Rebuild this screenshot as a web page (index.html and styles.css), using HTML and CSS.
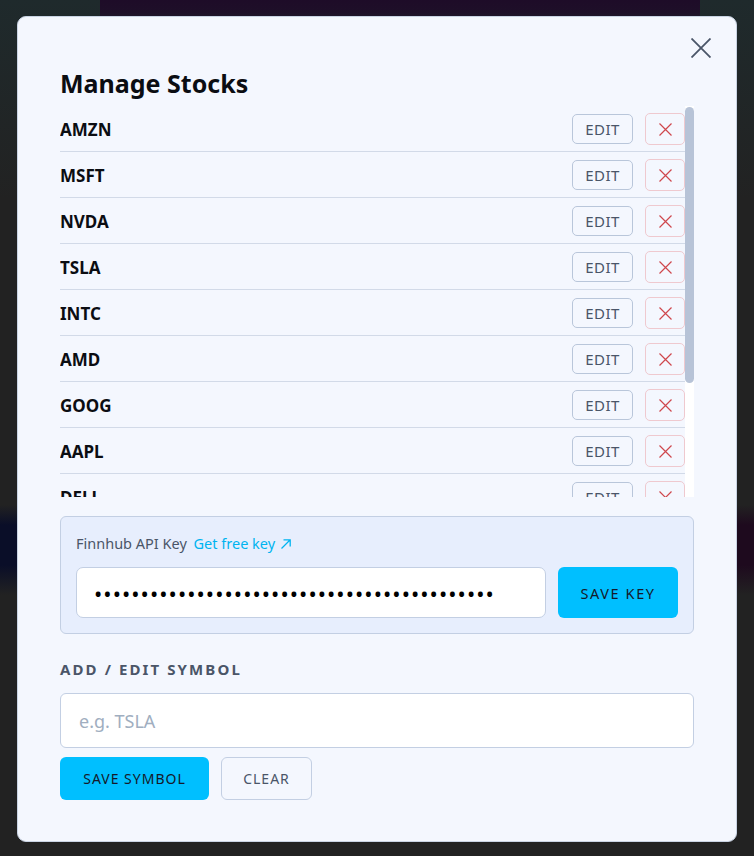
FILE: index.html
```html
<!DOCTYPE html>
<html lang="en">
<head>
<meta charset="utf-8">
<title>Manage Stocks</title>
<link rel="stylesheet" href="styles.css">
</head>
<body>
<div class="backdrop">
  <div class="modal">
    <button class="close" aria-label="Close">
      <svg width="20" height="20" viewBox="0 0 20 20"><path d="M0.5 0.5L19.5 19.5M19.5 0.5L0.5 19.5" stroke="#4a5568" stroke-width="1.8" fill="none"/></svg>
    </button>
    <h2 class="title">Manage Stocks</h2>
    <div class="listwrap">
      <div class="list">
        <div class="row"><span class="sym">AMZN</span><div class="actions"><button class="edit">EDIT</button><button class="del"><svg width="13" height="13" viewBox="0 0 13 13"><path d="M0.5 0.5L12.5 12.5M12.5 0.5L0.5 12.5" stroke="#cf474d" stroke-width="1.2"/></svg></button></div></div>
        <div class="row"><span class="sym">MSFT</span><div class="actions"><button class="edit">EDIT</button><button class="del"><svg width="13" height="13" viewBox="0 0 13 13"><path d="M0.5 0.5L12.5 12.5M12.5 0.5L0.5 12.5" stroke="#cf474d" stroke-width="1.2"/></svg></button></div></div>
        <div class="row"><span class="sym">NVDA</span><div class="actions"><button class="edit">EDIT</button><button class="del"><svg width="13" height="13" viewBox="0 0 13 13"><path d="M0.5 0.5L12.5 12.5M12.5 0.5L0.5 12.5" stroke="#cf474d" stroke-width="1.2"/></svg></button></div></div>
        <div class="row"><span class="sym">TSLA</span><div class="actions"><button class="edit">EDIT</button><button class="del"><svg width="13" height="13" viewBox="0 0 13 13"><path d="M0.5 0.5L12.5 12.5M12.5 0.5L0.5 12.5" stroke="#cf474d" stroke-width="1.2"/></svg></button></div></div>
        <div class="row"><span class="sym">INTC</span><div class="actions"><button class="edit">EDIT</button><button class="del"><svg width="13" height="13" viewBox="0 0 13 13"><path d="M0.5 0.5L12.5 12.5M12.5 0.5L0.5 12.5" stroke="#cf474d" stroke-width="1.2"/></svg></button></div></div>
        <div class="row"><span class="sym">AMD</span><div class="actions"><button class="edit">EDIT</button><button class="del"><svg width="13" height="13" viewBox="0 0 13 13"><path d="M0.5 0.5L12.5 12.5M12.5 0.5L0.5 12.5" stroke="#cf474d" stroke-width="1.2"/></svg></button></div></div>
        <div class="row"><span class="sym">GOOG</span><div class="actions"><button class="edit">EDIT</button><button class="del"><svg width="13" height="13" viewBox="0 0 13 13"><path d="M0.5 0.5L12.5 12.5M12.5 0.5L0.5 12.5" stroke="#cf474d" stroke-width="1.2"/></svg></button></div></div>
        <div class="row"><span class="sym">AAPL</span><div class="actions"><button class="edit">EDIT</button><button class="del"><svg width="13" height="13" viewBox="0 0 13 13"><path d="M0.5 0.5L12.5 12.5M12.5 0.5L0.5 12.5" stroke="#cf474d" stroke-width="1.2"/></svg></button></div></div>
        <div class="row"><span class="sym">DELL</span><div class="actions"><button class="edit">EDIT</button><button class="del"><svg width="13" height="13" viewBox="0 0 13 13"><path d="M0.5 0.5L12.5 12.5M12.5 0.5L0.5 12.5" stroke="#cf474d" stroke-width="1.2"/></svg></button></div></div>
        <div class="row"><span class="sym">META</span><div class="actions"><button class="edit">EDIT</button><button class="del"><svg width="13" height="13" viewBox="0 0 13 13"><path d="M0.5 0.5L12.5 12.5M12.5 0.5L0.5 12.5" stroke="#cf474d" stroke-width="1.2"/></svg></button></div></div>
        <div class="row"><span class="sym">NFLX</span><div class="actions"><button class="edit">EDIT</button><button class="del"><svg width="13" height="13" viewBox="0 0 13 13"><path d="M0.5 0.5L12.5 12.5M12.5 0.5L0.5 12.5" stroke="#cf474d" stroke-width="1.2"/></svg></button></div></div>
        <div class="row"><span class="sym">IBM</span><div class="actions"><button class="edit">EDIT</button><button class="del"><svg width="13" height="13" viewBox="0 0 13 13"><path d="M0.5 0.5L12.5 12.5M12.5 0.5L0.5 12.5" stroke="#cf474d" stroke-width="1.2"/></svg></button></div></div>
      </div>
      <div class="track"><div class="thumb"></div></div>
    </div>
    <div class="keypanel">
      <div class="keylabel">Finnhub API Key <a class="keylink" href="#">Get free key <svg width="12" height="12" viewBox="0 0 12 12"><path d="M1.5 10.5L10 2M3.5 1.8H10.2V8.5" stroke="#00b4f0" stroke-width="1.3" fill="none"/></svg></a></div>
      <div class="keyrow">
        <input class="keyinput" type="password" value="abcdefghijklmnopqrstuvwxyzabcdefghijklmnopq">
        <button class="btn primary keybtn">SAVE KEY</button>
      </div>
    </div>
    <div class="section">ADD / EDIT SYMBOL</div>
    <input class="syminput" type="text" placeholder="e.g. TSLA">
    <div class="btnrow">
      <button class="btn primary savesym">SAVE SYMBOL</button>
      <button class="btn ghost">CLEAR</button>
    </div>
  </div>
</div>
</body>
</html>
```
FILE: styles.css
```css
* { box-sizing: border-box; }
html, body { margin: 0; padding: 0; }
body {
  width: 754px;
  height: 856px;
  overflow: hidden;
  font-family: "Noto Sans", "Open Sans", sans-serif;
  background:
    linear-gradient(180deg, rgba(30,12,40,1) 0px, rgba(30,12,40,0.9) 12px, rgba(30,12,40,0) 30px) 100px 0 / 600px 40px no-repeat,
    linear-gradient(180deg, rgba(10,14,40,0) 0, rgba(10,14,40,1) 20px, rgba(10,14,40,1) 60px, rgba(10,14,40,0) 90px) 0 505px / 40px 95px no-repeat,
    linear-gradient(180deg, rgba(30,10,30,0) 0, rgba(30,10,30,1) 20px, rgba(30,10,30,1) 60px, rgba(30,10,30,0) 90px) 714px 505px / 40px 95px no-repeat,
    linear-gradient(180deg, #1f2a2c 0, #222 200px, #222 100%);
}
.backdrop {
  width: 754px;
  height: 856px;
  display: flex;
  align-items: flex-start;
  justify-content: center;
  padding-top: 16px;
}
.modal {
  position: relative;
  width: 720px;
  height: 826px;
  background: #f4f7fe;
  border: 1px solid #c9d3e3;
  border-radius: 9px;
  padding: 50px 42px 41px 42px;
}
.close {
  position: absolute;
  top: 21px;
  right: 25px;
  width: 20px;
  height: 20px;
  padding: 0;
  border: 0;
  background: none;
  display: flex;
}
.title {
  margin: 0 0 7px 0;
  font-size: 25px;
  line-height: 32px;
  font-weight: 700;
  color: #0b0d12;
}
.listwrap {
  display: flex;
  height: 391px;
}
.list {
  flex: 1;
  height: 391px;
  overflow: hidden;
}
.track {
  width: 9px;
  height: 391px;
  background: #ffffff;
  padding-top: 1px;
}
.thumb {
  width: 9px;
  height: 276px;
  background: #b7c3d7;
  border-radius: 5px;
}
.row {
  display: flex;
  align-items: center;
  justify-content: space-between;
  padding: 7px 0 6px 0;
  border-bottom: 1px solid #d2dae8;
}
.sym {
  font-size: 17px;
  font-weight: 700;
  color: #0b0d12;
}
.actions {
  display: flex;
  align-items: center;
  gap: 12px;
}
.edit {
  width: 61px;
  height: 30px;
  border: 1px solid #b9c6da;
  border-radius: 5px;
  background: transparent;
  font-family: inherit;
  font-size: 15px;
  letter-spacing: 0.4px;
  color: #4a5568;
  padding: 0;
}
.del {
  width: 40px;
  height: 32px;
  border: 1px solid #efc9cf;
  border-radius: 5px;
  background: transparent;
  padding: 0;
  display: flex;
  align-items: center;
  justify-content: center;
}
.keypanel {
  margin-top: 19px;
  background: #e7eefd;
  border: 1px solid #c3cfe3;
  border-radius: 6px;
  padding: 16px 15px 15px 15px;
}
.keylabel {
  font-size: 14.5px;
  line-height: 20px;
  color: #4a5568;
  margin-bottom: 14px;
}
.keylink {
  color: #00b4f0;
  text-decoration: none;
  margin-left: 3px;
}
.keylink svg { vertical-align: -1px; margin-left: 1px; }
.keyrow {
  display: flex;
  gap: 12px;
}
.keyinput {
  flex: 1;
  height: 51px;
  border: 1px solid #c3cfe3;
  border-radius: 7px;
  background: #fff;
  padding: 0 17px;
  font-family: "Noto Sans", sans-serif;
  font-size: 22px;
  letter-spacing: 1.05px;
  color: #000;
  outline: none;
}
.btn {
  font-family: inherit;
  font-size: 14px;
  letter-spacing: 1px;
  border-radius: 6px;
  padding: 0;
  height: 43px;
}
.primary {
  background: #00bfff;
  border: 0;
  color: #15192a;
}
.keybtn {
  width: 120px;
  height: 51px;
  font-size: 14.5px;
  letter-spacing: 1.6px;
}
.section {
  margin-top: 25px;
  font-size: 15px;
  line-height: 20px;
  font-weight: 700;
  letter-spacing: 2.1px;
  color: #4a5568;
}
.syminput {
  display: block;
  width: 100%;
  margin-top: 14px;
  height: 55px;
  border: 1px solid #c3cfe3;
  border-radius: 6px;
  background: #fff;
  padding: 0 18px;
  font-family: inherit;
  font-size: 18px;
  outline: none;
}
.syminput::placeholder { color: #a0aec0; }
.btnrow {
  display: flex;
  gap: 12px;
  margin-top: 9px;
}
.savesym { width: 149px; }
.ghost {
  width: 91px;
  background: transparent;
  border: 1px solid #c3cfe3;
  color: #4a5568;
}
```
